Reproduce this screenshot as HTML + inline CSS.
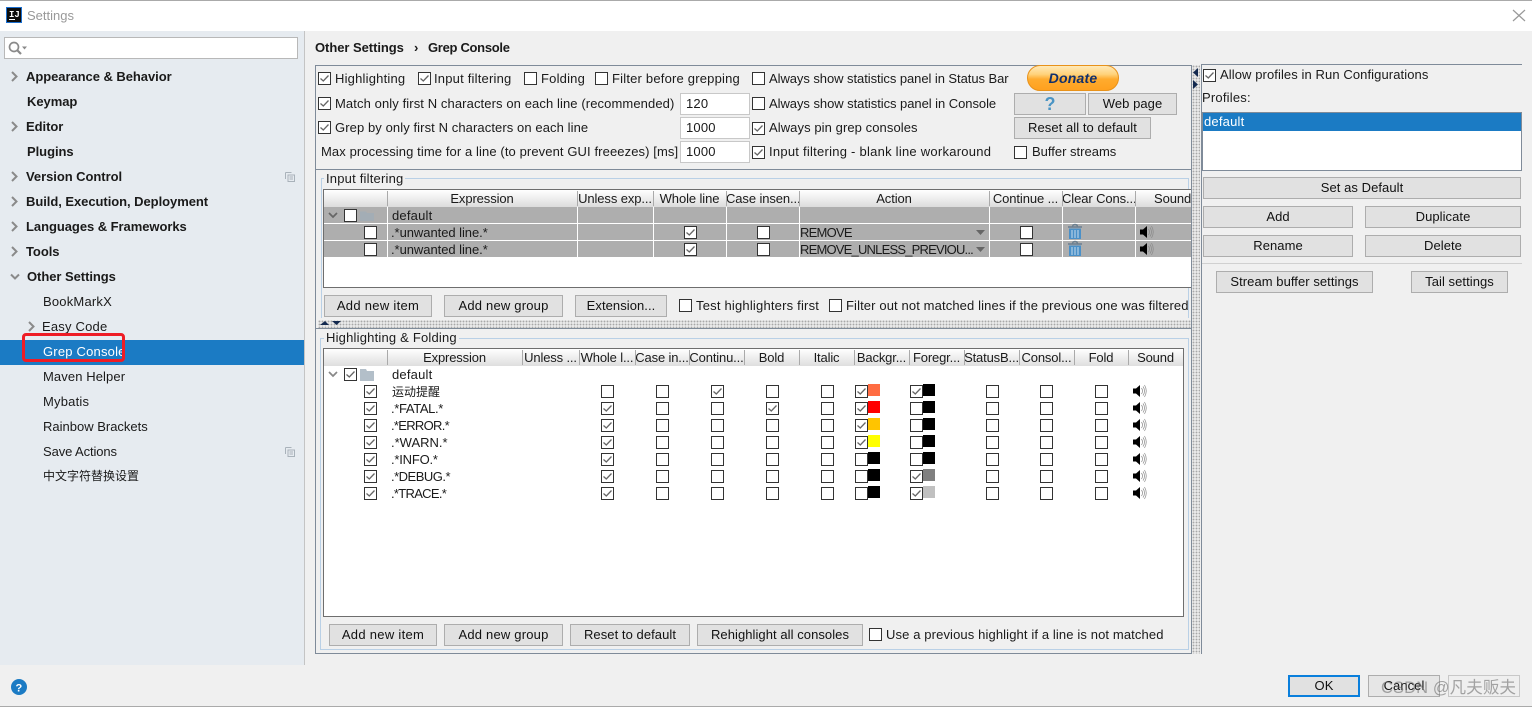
<!DOCTYPE html>
<html><head><meta charset="utf-8"><title>Settings</title>
<style>
html,body{margin:0;padding:0;width:1532px;height:707px;overflow:hidden;background:#f0f0f0}
body{position:relative;font:13px/20px "Liberation Sans","Noto Sans CJK SC",sans-serif;color:#1a1a1a;letter-spacing:.2px}
div{position:absolute;box-sizing:border-box;white-space:nowrap}
.b{background:#e1e1e1;border:1px solid #adadad;text-align:center;line-height:20px;color:#111;letter-spacing:.06px}
.in{background:#fff;border:1px solid #c8c8c8;line-height:19px;padding-left:5px}
.h{font-weight:bold;letter-spacing:-.05px}
.hd{text-align:center;top:190px;overflow:hidden;letter-spacing:-.1px;height:17px;line-height:18px}
.hh{text-align:center;top:349px;overflow:hidden;letter-spacing:-.15px;height:17px;line-height:18px}
.sl{background:#7f8b99}
.sp{background-color:#e8e8e8;background-image:radial-gradient(#a8a8a8 .7px,transparent 1px);background-size:3px 3px}
svg{position:absolute;left:0;top:0}
</style></head><body>
<div style="left:0;top:0;width:1532px;height:31px;background:#fff;border-top:1px solid #aaa"></div>
<div style="left:27px;top:6px;color:#999;letter-spacing:0">Settings</div>
<div style="left:0;top:31px;width:304px;height:634px;background:#e6ebf0"></div>
<div style="left:304px;top:31px;width:1px;height:634px;background:#c4c4c4"></div>
<div style="left:4px;top:37px;width:294px;height:22px;background:#fff;border:1px solid #b8b8b8"></div>
<div style="left:0;top:340px;width:304px;height:25px;background:#1b7bc4"></div>
<div class="h" style="left:26px;top:67px">Appearance &amp; Behavior</div>
<div class="h" style="left:27px;top:92px">Keymap</div>
<div class="h" style="left:26px;top:117px">Editor</div>
<div class="h" style="left:27px;top:142px">Plugins</div>
<div class="h" style="left:26px;top:167px">Version Control</div>
<div class="h" style="left:26px;top:192px">Build, Execution, Deployment</div>
<div class="h" style="left:26px;top:217px">Languages &amp; Frameworks</div>
<div class="h" style="left:26px;top:242px">Tools</div>
<div class="h" style="left:27px;top:267px">Other Settings</div>
<div style="left:43px;top:292px">BookMarkX</div>
<div style="left:42px;top:317px">Easy Code</div>
<div style="left:43px;top:342px;color:#fff">Grep Console</div>
<div style="left:43px;top:367px;letter-spacing:.1px">Maven Helper</div>
<div style="left:43px;top:392px">Mybatis</div>
<div style="left:43px;top:417px;letter-spacing:0">Rainbow Brackets</div>
<div style="left:43px;top:442px;letter-spacing:-.1px">Save Actions</div>
<div style="left:43px;top:466px;font-size:12px;letter-spacing:0">中文字符替换设置</div>
<div style="left:22px;top:333px;width:103px;height:29px;border:3px solid #ee1c25;border-radius:4px"></div>

<div class="h" style="left:315px;top:38px;letter-spacing:-.05px">Other Settings</div>
<div class="h" style="left:414px;top:38px">›</div>
<div class="h" style="left:428px;top:38px;letter-spacing:-.3px">Grep Console</div>

<div class="sl" style="left:315px;top:65px;width:877px;height:1px"></div>
<div class="sl" style="left:315px;top:65px;width:1px;height:589px"></div>
<div class="sl" style="left:316px;top:169px;width:875px;height:1px"></div>
<div class="sl" style="left:1191px;top:65px;width:1px;height:589px"></div>
<div class="sl" style="left:315px;top:653px;width:877px;height:1px"></div>
<div class="sl" style="left:316px;top:328px;width:875px;height:1px"></div>

<div style="left:335px;top:69px">Highlighting</div>
<div style="left:434px;top:69px">Input filtering</div>
<div style="left:541px;top:69px">Folding</div>
<div style="left:612px;top:69px">Filter before grepping</div>
<div style="left:769px;top:69px;letter-spacing:-.06px">Always show statistics panel in Status Bar</div>
<div style="left:335px;top:94px;letter-spacing:.1px">Match only first N characters on each line (recommended)</div>
<div style="left:769px;top:94px;letter-spacing:-.05px">Always show statistics panel in Console</div>
<div style="left:335px;top:118px;letter-spacing:.09px">Grep by only first N characters on each line</div>
<div style="left:769px;top:118px;letter-spacing:.08px">Always pin grep consoles</div>
<div style="left:321px;top:142px;letter-spacing:.1px">Max processing time for a line (to prevent GUI freeezes) [ms]</div>
<div style="left:769px;top:142px;letter-spacing:.25px">Input filtering - blank line workaround</div>
<div style="left:1032px;top:142px;letter-spacing:0">Buffer streams</div>
<div class="in" style="left:680px;top:93px;width:70px;height:22px">120</div>
<div class="in" style="left:680px;top:117px;width:70px;height:22px">1000</div>
<div class="in" style="left:680px;top:141px;width:70px;height:22px">1000</div>

<div style="left:1027px;top:65px;width:92px;height:26px;border-radius:13px;border:1px solid #e8921a;background:linear-gradient(#ffe9b8 0,#ffd27a 35%,#ffab2e 55%,#ffa11f 100%);text-align:center;font:italic bold 14px/24px 'Liberation Sans',sans-serif;color:#12306b">Donate</div>
<div class="b" style="left:1014px;top:93px;width:72px;height:22px;font:bold 18px/20px 'Liberation Sans',sans-serif;color:#4a94c4">?</div>
<div class="b" style="left:1088px;top:93px;width:89px;height:22px">Web page</div>
<div class="b" style="left:1014px;top:117px;width:137px;height:22px">Reset all to default</div>

<div style="left:321px;top:178px;width:868px;height:140px;border:1px solid #b9d0e6;border-bottom:0"></div>
<div style="left:324px;top:170px;background:#f0f0f0;padding:0 2px;height:16px;line-height:18px">Input filtering</div>
<div style="left:323px;top:189px;width:868px;height:99px;background:#fff;border:1px solid #6e6e6e;border-right:0"></div>
<div style="left:324px;top:190px;width:867px;height:17px;background:linear-gradient(#fff,#dcdcdc)"></div>
<div style="left:324px;top:207px;width:867px;height:16px;background:#aeaeae"></div>
<div style="left:324px;top:224px;width:867px;height:16px;background:#aeaeae"></div>
<div style="left:324px;top:241px;width:867px;height:16px;background:#aeaeae"></div>
<div class="hd" style="left:387px;width:190px">Expression</div>
<div class="hd" style="left:577px;width:76px">Unless exp...</div>
<div class="hd" style="left:653px;width:73px">Whole line</div>
<div class="hd" style="left:726px;width:73px">Case insen...</div>
<div class="hd" style="left:799px;width:190px">Action</div>
<div class="hd" style="left:989px;width:73px">Continue ...</div>
<div class="hd" style="left:1062px;width:73px">Clear Cons...</div>
<div class="hd" style="left:1154px;width:37px;text-align:left">Sound</div>
<div style="left:392px;top:206px">default</div>
<div style="left:391px;top:223px;letter-spacing:-.05px">.*unwanted line.*</div>
<div style="left:391px;top:240px;letter-spacing:-.05px">.*unwanted line.*</div>
<div style="left:800px;top:223px;letter-spacing:-.75px">REMOVE</div>
<div style="left:800px;top:240px;letter-spacing:-.8px">REMOVE_UNLESS_PREVIOU...</div>

<div class="b" style="left:324px;top:295px;width:108px;height:22px;letter-spacing:.3px">Add new item</div>
<div class="b" style="left:444px;top:295px;width:119px;height:22px;letter-spacing:.2px">Add new group</div>
<div class="b" style="left:575px;top:295px;width:92px;height:22px">Extension...</div>
<div style="left:696px;top:296px">Test highlighters first</div>
<div style="left:846px;top:296px;letter-spacing:.12px">Filter out not matched lines if the previous one was filtered</div>

<div class="sp" style="left:318px;top:320px;width:873px;height:8px"></div>
<div class="sp" style="left:1192px;top:65px;width:8px;height:589px"></div>

<div style="left:320px;top:338px;width:869px;height:312px;border:1px solid #b9d0e6"></div>
<div style="left:324px;top:329px;background:#f0f0f0;padding:0 2px;height:16px;line-height:18px">Highlighting &amp; Folding</div>
<div style="left:323px;top:348px;width:861px;height:269px;background:#fff;border:1px solid #6e6e6e"></div>
<div style="left:324px;top:349px;width:859px;height:17px;background:linear-gradient(#fff,#dedede)"></div>
<div class="hh" style="left:387px;width:135px">Expression</div>
<div class="hh" style="left:522px;width:57px">Unless ...</div>
<div class="hh" style="left:579px;width:56px">Whole l...</div>
<div class="hh" style="left:635px;width:54px">Case in...</div>
<div class="hh" style="left:689px;width:55px">Continu...</div>
<div class="hh" style="left:744px;width:55px">Bold</div>
<div class="hh" style="left:799px;width:55px">Italic</div>
<div class="hh" style="left:854px;width:55px">Backgr...</div>
<div class="hh" style="left:909px;width:55px">Foregr...</div>
<div class="hh" style="left:964px;width:55px">StatusB...</div>
<div class="hh" style="left:1019px;width:55px">Consol...</div>
<div class="hh" style="left:1074px;width:54px">Fold</div>
<div class="hh" style="left:1128px;width:55px">Sound</div>
<div style="left:392px;top:365px">default</div>
<div style="left:392px;top:382px;font-size:12px;letter-spacing:0">运动提醒</div>
<div style="left:391px;top:399px;letter-spacing:-.35px">.*FATAL.*</div>
<div style="left:391px;top:416px;letter-spacing:-.7px">.*ERROR.*</div>
<div style="left:391px;top:433px;letter-spacing:0">.*WARN.*</div>
<div style="left:391px;top:450px;letter-spacing:-.2px">.*INFO.*</div>
<div style="left:391px;top:467px;letter-spacing:-.5px">.*DEBUG.*</div>
<div style="left:391px;top:484px;letter-spacing:-.7px">.*TRACE.*</div>

<div class="b" style="left:329px;top:624px;width:108px;height:22px;letter-spacing:.3px">Add new item</div>
<div class="b" style="left:444px;top:624px;width:119px;height:22px;letter-spacing:.2px">Add new group</div>
<div class="b" style="left:570px;top:624px;width:120px;height:22px">Reset to default</div>
<div class="b" style="left:697px;top:624px;width:166px;height:22px">Rehighlight all consoles</div>
<div style="left:886px;top:625px;letter-spacing:.12px">Use a previous highlight if a line is not matched</div>

<div class="sl" style="left:1201px;top:64px;width:321px;height:1px"></div>
<div class="sl" style="left:1201px;top:64px;width:1px;height:590px"></div>
<div style="left:1220px;top:65px;letter-spacing:.09px">Allow profiles in Run Configurations</div>
<div style="left:1202px;top:88px">Profiles:</div>
<div style="left:1202px;top:112px;width:320px;height:59px;background:#fff;border:1px solid #7f8b99"></div>
<div style="left:1203px;top:113px;width:318px;height:18px;background:#1b7bc4;color:#fff;padding-left:1px;line-height:18px">default</div>
<div class="b" style="left:1203px;top:177px;width:318px;height:22px">Set as Default</div>
<div class="b" style="left:1203px;top:206px;width:150px;height:22px">Add</div>
<div class="b" style="left:1365px;top:206px;width:156px;height:22px">Duplicate</div>
<div class="b" style="left:1203px;top:235px;width:150px;height:22px">Rename</div>
<div class="b" style="left:1365px;top:235px;width:156px;height:22px">Delete</div>
<div style="left:1202px;top:263px;width:320px;height:1px;background:#d0d0d0"></div>
<div class="b" style="left:1216px;top:271px;width:157px;height:22px">Stream buffer settings</div>
<div class="b" style="left:1411px;top:271px;width:97px;height:22px">Tail settings</div>

<div class="b" style="left:1288px;top:675px;width:72px;height:22px;border:2px solid #0a7fdc;line-height:18px">OK</div>
<div class="b" style="left:1368px;top:675px;width:72px;height:22px;background:#e6e6e6">Cancel</div>
<div class="b" style="left:1448px;top:675px;width:72px;height:22px;background:#efefef;border-color:#c8c8c8"></div>
<div style="left:1381px;top:677px;font-size:16.500px;line-height:22px;color:rgba(110,110,110,.6);letter-spacing:.1px">CSDN @凡夫贩夫</div>
<div style="left:0;top:706px;width:1532px;height:1px;background:#aaa"></div>

<svg width="1532" height="707" viewBox="0 0 1532 707">
<defs>
<g id="u"><rect x=".5" y=".5" width="12" height="12" fill="#fff" stroke="#333"/></g>
<g id="k"><use href="#u"/><path d="M2.500 6.500L5.300 9L10.500 3.500" fill="none" stroke="#666" stroke-width="1.300"/></g>
<g id="s"><path d="M0 3.500H3L7 0V12L3 8.500H0Z" fill="#000"/><path d="M8.500 3Q10.500 6 8.500 9M10 1.500Q13 6 10 10.500M11.500 0Q15 6 11.500 12" fill="none" stroke="#888" stroke-width=".7"/></g>
<g id="tr"><path d="M0 3H14M4.500 3Q4.500 .5 7 .5T9.500 3" fill="none" stroke="#6b7f90" stroke-width="1.400"/><path d="M1 4.500H13V15H1Z" fill="#4a90c8"/><path d="M4 6V14M7 6V14M10 6V14" stroke="#c8dcec" stroke-width="1"/></g>
<g id="ar"><path d="M0 0L4.500 4.500L0 9" fill="none" stroke="#8a8a8a" stroke-width="2"/></g>
<g id="cp"><path d="M.5 .5H6.500M.5 .5V7M3 3H9.500V9.500H3ZM4.500 5H8M4.500 7H8" fill="none" stroke="#a9b2ba" stroke-width="1"/></g>
</defs>
<!-- title icon -->
<rect x="6.500" y="7.500" width="15" height="15" fill="#0d0d0d" stroke="#1b6fd0"/>
<text x="9" y="17" font-family="Liberation Mono" font-weight="bold" font-size="9" fill="#fff" letter-spacing="0">IJ</text>
<path d="M9 19.500H15" stroke="#fff"/>
<path d="M1513 10L1525 21M1525 10L1513 21" stroke="#999" stroke-width="1.200"/>
<!-- search -->
<circle cx="14" cy="47" r="4.500" fill="none" stroke="#8a8a8a" stroke-width="1.700"/><path d="M17.500 50.500L21 54" stroke="#8a8a8a" stroke-width="2.200"/><path d="M22 46.500H27L24.500 49.500Z" fill="#8a8a8a"/>
<!-- tree arrows -->
<use href="#ar" x="12" y="72"/><use href="#ar" x="12" y="122"/><use href="#ar" x="12" y="172"/><use href="#ar" x="12" y="197"/><use href="#ar" x="12" y="222"/><use href="#ar" x="12" y="247"/><use href="#ar" x="29" y="322"/>
<path d="M11 274.500L15 278.500L19 274.500" fill="none" stroke="#8a8a8a" stroke-width="2"/>
<use href="#cp" x="285" y="172"/><use href="#cp" x="285" y="447"/>
<!-- top checks -->
<use href="#k" x="318" y="72"/><use href="#k" x="418" y="72"/><use href="#u" x="524" y="72"/><use href="#u" x="595" y="72"/><use href="#u" x="752" y="72"/>
<use href="#k" x="318" y="97"/><use href="#u" x="752" y="97"/>
<use href="#k" x="318" y="121"/><use href="#k" x="752" y="122"/>
<use href="#k" x="752" y="146"/><use href="#u" x="1014" y="146"/>
<!-- splitter arrows -->
<path d="M320 325L325 321L329 325ZM332 321H341L336.500 325Z" fill="#13294f"/>
<path d="M1198 68V77L1193 72.500ZM1193 80V89L1198 84.500Z" fill="#13294f"/>
<!-- table1 lines -->
<path d="M387.500 207V257M577.500 207V257M653.500 207V257M726.500 207V257M799.500 207V257M989.500 207V257M1062.500 207V257M1135.500 207V257" stroke="#fff"/>
<path d="M387.500 191V206M577.500 191V206M653.500 191V206M726.500 191V206M799.500 191V206M989.500 191V206M1062.500 191V206M1135.500 191V206" stroke="#aaa"/>
<path d="M329 213L333 217L337 213" fill="none" stroke="#666" stroke-width="1.700"/>
<use href="#u" x="344" y="209"/>
<path d="M360 211.500H366L367 213H374V221H360Z" fill="#a3adb5"/>
<use href="#u" x="364" y="226"/><use href="#u" x="364" y="243"/>
<use href="#k" x="684" y="226"/><use href="#k" x="684" y="243"/>
<use href="#u" x="757" y="226"/><use href="#u" x="757" y="243"/>
<use href="#u" x="1020" y="226"/><use href="#u" x="1020" y="243"/>
<path d="M976 230H985L980.500 235ZM976 247H985L980.500 252Z" fill="#666"/>
<use href="#tr" x="1068" y="224"/><use href="#tr" x="1068" y="241"/>
<use href="#s" x="1140" y="226"/><use href="#s" x="1140" y="243"/>
<use href="#u" x="679" y="299"/><use href="#u" x="829" y="299"/>
<!-- table2 header -->
<path d="M387.500 350V365M522.500 350V365M579.500 350V365M635.500 350V365M689.500 350V365M744.500 350V365M799.500 350V365M854.500 350V365M909.500 350V365M964.500 350V365M1019.500 350V365M1074.500 350V365M1128.500 350V365" stroke="#aaa"/>
<path d="M329 372L333 376L337 372" fill="none" stroke="#888" stroke-width="1.700"/>
<use href="#k" x="344" y="368"/>
<path d="M360 369H366L367 371H374V381H360Z" fill="#b3bfc9"/>
<use href="#k" x="364" y="385"/><use href="#k" x="364" y="402"/><use href="#k" x="364" y="419"/><use href="#k" x="364" y="436"/><use href="#k" x="364" y="453"/><use href="#k" x="364" y="470"/><use href="#k" x="364" y="487"/>
<use href="#u" x="601" y="385"/><use href="#k" x="601" y="402"/><use href="#k" x="601" y="419"/><use href="#k" x="601" y="436"/><use href="#k" x="601" y="453"/><use href="#k" x="601" y="470"/><use href="#k" x="601" y="487"/>
<use href="#u" x="656" y="385"/><use href="#u" x="656" y="402"/><use href="#u" x="656" y="419"/><use href="#u" x="656" y="436"/><use href="#u" x="656" y="453"/><use href="#u" x="656" y="470"/><use href="#u" x="656" y="487"/>
<use href="#k" x="711" y="385"/><use href="#u" x="711" y="402"/><use href="#u" x="711" y="419"/><use href="#u" x="711" y="436"/><use href="#u" x="711" y="453"/><use href="#u" x="711" y="470"/><use href="#u" x="711" y="487"/>
<use href="#u" x="766" y="385"/><use href="#k" x="766" y="402"/><use href="#u" x="766" y="419"/><use href="#u" x="766" y="436"/><use href="#u" x="766" y="453"/><use href="#u" x="766" y="470"/><use href="#u" x="766" y="487"/>
<use href="#u" x="821" y="385"/><use href="#u" x="821" y="402"/><use href="#u" x="821" y="419"/><use href="#u" x="821" y="436"/><use href="#u" x="821" y="453"/><use href="#u" x="821" y="470"/><use href="#u" x="821" y="487"/>
<!-- background swatches -->
<rect x="868" y="384" width="12" height="12" fill="#ff6c42"/><rect x="868" y="401" width="12" height="12" fill="#f00"/><rect x="868" y="418" width="12" height="12" fill="#ffc400"/><rect x="868" y="435" width="12" height="12" fill="#ff0"/><rect x="868" y="452" width="12" height="12" fill="#000"/><rect x="868" y="469" width="12" height="12" fill="#000"/><rect x="868" y="486" width="12" height="12" fill="#000"/>
<use href="#k" x="855" y="385"/><use href="#k" x="855" y="402"/><use href="#k" x="855" y="419"/><use href="#k" x="855" y="436"/><use href="#u" x="855" y="453"/><use href="#u" x="855" y="470"/><use href="#u" x="855" y="487"/>
<!-- foreground swatches -->
<rect x="923" y="384" width="12" height="12" fill="#000"/><rect x="923" y="401" width="12" height="12" fill="#000"/><rect x="923" y="418" width="12" height="12" fill="#000"/><rect x="923" y="435" width="12" height="12" fill="#000"/><rect x="923" y="452" width="12" height="12" fill="#000"/><rect x="923" y="469" width="12" height="12" fill="#808080"/><rect x="923" y="486" width="12" height="12" fill="#c0c0c0"/>
<use href="#k" x="910" y="385"/><use href="#u" x="910" y="402"/><use href="#u" x="910" y="419"/><use href="#u" x="910" y="436"/><use href="#u" x="910" y="453"/><use href="#k" x="910" y="470"/><use href="#k" x="910" y="487"/>
<use href="#u" x="986" y="385"/><use href="#u" x="986" y="402"/><use href="#u" x="986" y="419"/><use href="#u" x="986" y="436"/><use href="#u" x="986" y="453"/><use href="#u" x="986" y="470"/><use href="#u" x="986" y="487"/>
<use href="#u" x="1040" y="385"/><use href="#u" x="1040" y="402"/><use href="#u" x="1040" y="419"/><use href="#u" x="1040" y="436"/><use href="#u" x="1040" y="453"/><use href="#u" x="1040" y="470"/><use href="#u" x="1040" y="487"/>
<use href="#u" x="1095" y="385"/><use href="#u" x="1095" y="402"/><use href="#u" x="1095" y="419"/><use href="#u" x="1095" y="436"/><use href="#u" x="1095" y="453"/><use href="#u" x="1095" y="470"/><use href="#u" x="1095" y="487"/>
<use href="#s" x="1133" y="385"/><use href="#s" x="1133" y="402"/><use href="#s" x="1133" y="419"/><use href="#s" x="1133" y="436"/><use href="#s" x="1133" y="453"/><use href="#s" x="1133" y="470"/><use href="#s" x="1133" y="487"/>
<use href="#u" x="869" y="628"/>
<use href="#k" x="1203" y="69"/>
<!-- help -->
<circle cx="19" cy="687" r="8" fill="#1b7bc4"/>
<text x="19" y="691.500" text-anchor="middle" font-family="Liberation Sans" font-weight="bold" font-size="11" fill="#fff">?</text>
</svg>
</body></html>
